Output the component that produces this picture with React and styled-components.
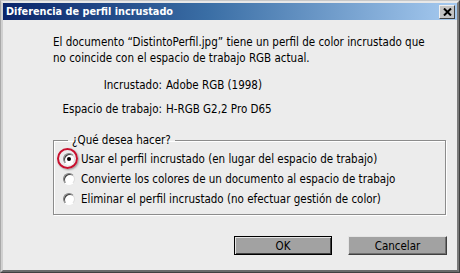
import React from "react";
import styled, { createGlobalStyle } from "styled-components";

const Global = createGlobalStyle`
  html, body { margin: 0; padding: 0; background: #ececec; }
  body { font-family: "DejaVu Sans Condensed", "DejaVu Sans", sans-serif; font-size: 11.5px; color: #000; }
`;

const Window = styled.div`
  box-sizing: border-box;
  width: 460px;
  height: 273px;
  border: 1px solid;
  border-color: #c8c8c8 #404040 #404040 #a8a8a8;
  background: #ececec;
  display: flex;
  flex-direction: column;
`;

const Inner = styled.div`
  flex: 1;
  display: flex;
  flex-direction: column;
  border: 2px solid;
  border-color: #e8e8e8 #7a7a7a #6a6a6a #d0d0d0;
`;

const TitleBar = styled.div`
  height: 17px;
  display: flex;
  align-items: center;
  padding: 0 2px 0 3px;
  background: linear-gradient(to right, #0a246a 0%, #3a6ea5 45%, #a6caf0 100%);
`;

const Title = styled.div`
  flex: 1;
  color: #fff;
  font-weight: bold;
  font-size: 10.8px;
`;

const CloseButton = styled.div`
  box-sizing: border-box;
  width: 16px;
  height: 14px;
  background: #c4c4c4;
  border: 1px solid;
  border-color: #f0f0f0 #404040 #404040 #f0f0f0;
  display: flex;
  align-items: center;
  justify-content: center;
`;

const Body = styled.div`
  flex: 1;
  padding: 14px 10px 0 50px;
  display: flex;
  flex-direction: column;
`;

const Message = styled.p`
  margin: 0;
  line-height: 16px;
`;

const InfoTable = styled.div`
  margin-top: 11px;
  display: grid;
  grid-template-columns: 109px auto;
  column-gap: 4px;
  row-gap: 8px;
  line-height: 16px;
`;

const Label = styled.span`
  text-align: right;
`;

const Value = styled.span``;

const Group = styled.fieldset`
  box-sizing: border-box;
  margin: 15px 0 0 0;
  width: 393px;
  padding: 1px 9px 5px 9px;
  border: 1px solid #8c8c8c;
  box-shadow: 1px 1px 0 #fff, inset 1px 1px 0 #fff;
`;

const Legend = styled.legend`
  margin-left: 5px;
  padding: 0 4px;
  line-height: 16px;
`;

const Option = styled.label`
  display: flex;
  align-items: center;
  height: 20px;
  gap: 6px;
  position: relative;
`;

const Radio = styled.span`
  box-sizing: border-box;
  width: 12px;
  height: 12px;
  border-radius: 50%;
  border: 1px solid;
  border-color: #808080 #dcdcdc #ffffff #808080;
  background: #fff;
  box-shadow: inset 1px 1px 0 #404040;
  display: flex;
  align-items: center;
  justify-content: center;
  flex: none;
  &::after {
    content: "";
    width: 4px;
    height: 4px;
    border-radius: 50%;
    background: ${(p) => (p.$checked ? "#000" : "transparent")};
  }
`;

const Highlight = styled.span`
  position: absolute;
  left: -6px;
  top: -1px;
  width: 17px;
  height: 17px;
  border-radius: 50%;
  border: 2px solid #c8102e;
  box-shadow: 1px 1px 2px rgba(0, 0, 0, 0.35);
  pointer-events: none;
`;

const Buttons = styled.div`
  margin-top: 21px;
  display: flex;
  justify-content: flex-end;
  gap: 16px;
`;

const Button = styled.div`
  box-sizing: border-box;
  width: ${(p) => (p.$default ? 98 : 99)}px;
  height: 19px;
  background: #a2a2a2;
  display: flex;
  align-items: center;
  justify-content: center;
  border: 1px solid;
  border-color: ${(p) => (p.$default ? "#000" : "#e4e4e4 #404040 #404040 #e4e4e4")};
  box-shadow: ${(p) =>
    p.$default
      ? "inset 1px 1px 0 #e4e4e4, inset -1px -1px 0 #404040"
      : "inset -1px -1px 0 #707070"};
  line-height: 16px;
`;

export default function App() {
  return (
    <>
      <Global />
      <Window>
        <Inner>
          <TitleBar>
            <Title>Diferencia de perfil incrustado</Title>
            <CloseButton>
              <svg width="9" height="8" viewBox="0 0 9 8">
                <path d="M1 0.5 L8 7.5 M8 0.5 L1 7.5" stroke="#000" strokeWidth="2" />
              </svg>
            </CloseButton>
          </TitleBar>
          <Body>
            <Message>
              El documento “DistintoPerfil.jpg” tiene un perfil de color incrustado que
              <br />
              no coincide con el espacio de trabajo RGB actual.
            </Message>
            <InfoTable>
              <Label>Incrustado:</Label>
              <Value>Adobe RGB (1998)</Value>
              <Label>Espacio de trabajo:</Label>
              <Value>H-RGB G2,2 Pro D65</Value>
            </InfoTable>
            <Group>
              <Legend>¿Qué desea hacer?</Legend>
              <Option>
                <Radio $checked />
                <Highlight />
                Usar el perfil incrustado (en lugar del espacio de trabajo)
              </Option>
              <Option>
                <Radio />
                Convierte los colores de un documento al espacio de trabajo
              </Option>
              <Option>
                <Radio />
                Eliminar el perfil incrustado (no efectuar gestión de color)
              </Option>
            </Group>
            <Buttons>
              <Button $default>OK</Button>
              <Button>Cancelar</Button>
            </Buttons>
          </Body>
        </Inner>
      </Window>
    </>
  );
}
